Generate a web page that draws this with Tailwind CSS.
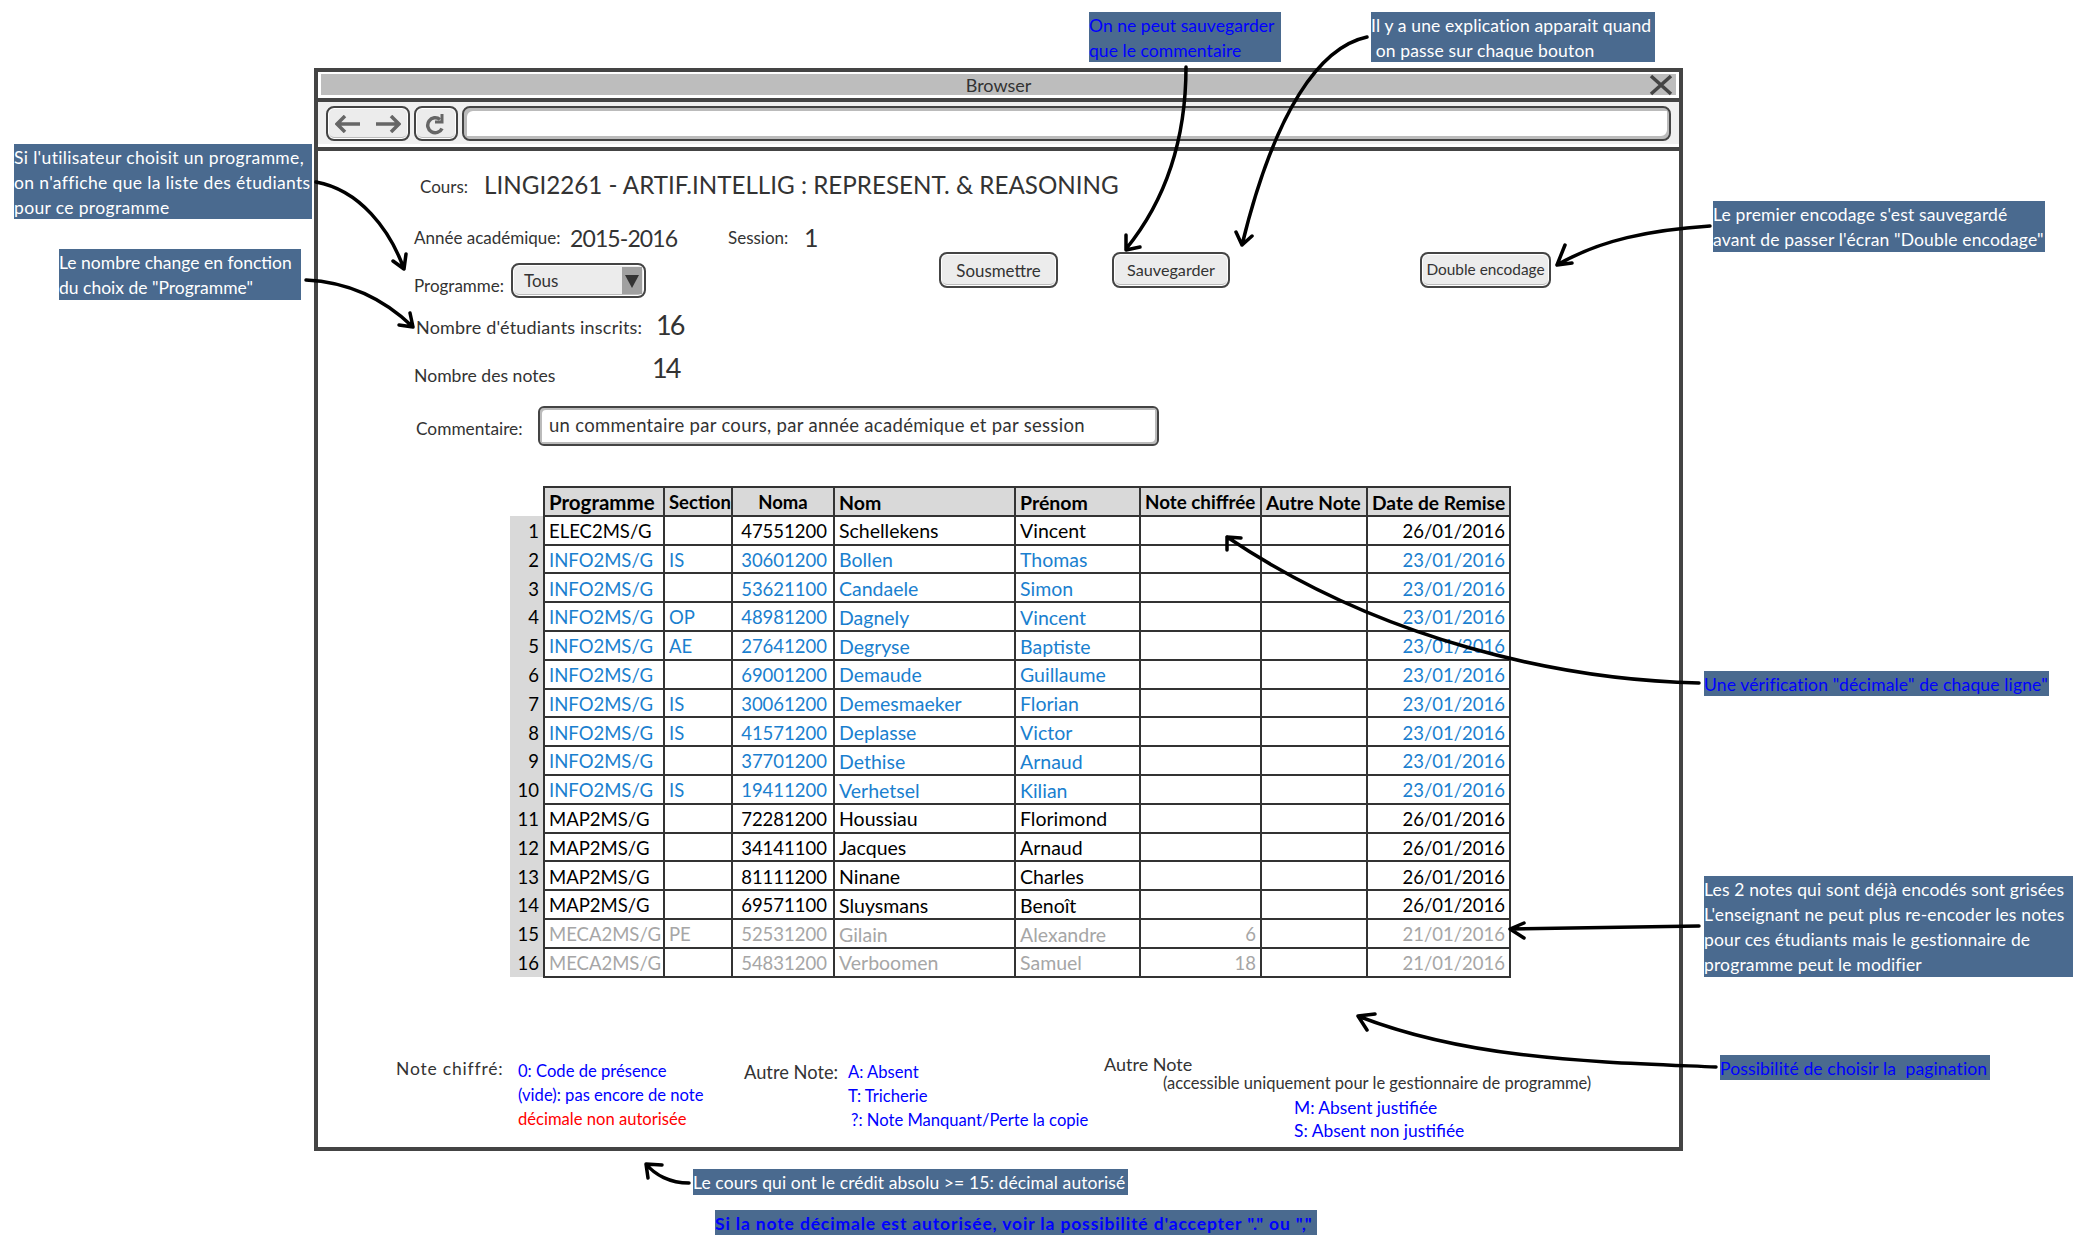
<!DOCTYPE html>
<html lang="fr">
<head>
    <meta charset="UTF-8">
    <title>Encodage des notes - wireframe</title>
    <script src="https://cdn.jsdelivr.net/npm/@tailwindcss/browser@4"></script>
</head>
<body class="bg-white">
<div class="relative w-[2090px] h-[1252px] overflow-hidden font-['Lato',sans-serif] text-[#333]">

    <!-- Browser window -->
    <div class="absolute left-[314px] top-[68px] w-[1369px] h-[1083px] flex flex-col border-4 border-[#444] bg-white">
        <!-- Title bar -->
        <div class="shrink-0 h-[26px] p-[2px_3px_3px_3px] bg-white">
            <div class="relative h-full flex items-center justify-center bg-[#bdbdbd] text-[18px] pt-[1px]">
                Browser
                <svg class="absolute right-[3px] top-0" width="24" height="22" viewBox="0 0 24 22" fill="none" stroke="#444" stroke-width="3.5"><path d="M2 2 L22 20 M22 2 L2 20"/></svg>
            </div>
        </div>
        <!-- Toolbar -->
        <div class="shrink-0 h-[53px] flex items-center gap-[4px] px-[8px] pb-[2px] border-y-4 border-[#444] bg-[#f0f0f0] shadow-[inset_0_-3px_0_#fff]">
            <div class="w-[84px] h-[35px] flex items-center justify-center gap-[14px] rounded-lg border-2 border-[#444] bg-[#ececec] shadow-[inset_0_0_0_1px_#fff,inset_0_-2px_0_#bbb]">
                <svg width="26" height="18" viewBox="0 0 26 18" fill="none" stroke="#666" stroke-width="3.5"><path d="M25 9 H2 M10 1 L2 9 L10 17"/></svg>
                <svg width="26" height="18" viewBox="0 0 26 18" fill="none" stroke="#666" stroke-width="3.5"><path d="M1 9 H24 M16 1 L24 9 L16 17"/></svg>
            </div>
            <div class="w-[44px] h-[35px] flex items-center justify-center rounded-lg border-2 border-[#444] bg-[#ececec] shadow-[inset_0_0_0_1px_#fff,inset_0_-2px_0_#bbb]">
                <svg width="22" height="22" viewBox="0 0 22 22" fill="none" stroke="#666" stroke-width="3.5"><path d="M15 6.5 A7.5 7.5 0 1 0 17 15.5"/><path d="M17 1 V9 H10" stroke-width="3"/></svg>
            </div>
            <div class="flex-1 h-[35px] rounded-lg border-2 border-[#444] bg-white shadow-[inset_3px_3px_0_#bbb,inset_-2px_-3px_0_#bbb]"></div>
        </div>

        <!-- Page content -->
        <div class="flex-1 flex flex-col">
            <div class="h-[32px] mt-[19px] pl-[102px] flex items-center gap-[16px]">
                <span class="text-[17px] pt-[2px]">Cours:</span>
                <span class="text-[24.2px] pb-[2px]">LINGI2261 - ARTIF.INTELLIG : REPRESENT. &amp; REASONING</span>
            </div>

            <div class="flex">
                <div class="w-[621px] pl-[96px] flex flex-col">
                    <div class="h-[32px] mt-[20px] flex items-center">
                        <span class="shrink-0 text-[17px] w-[156px]">Année académique:</span>
                        <span class="shrink-0 text-[23px] tracking-[-0.9px] w-[158px]">2015-2016</span>
                        <span class="shrink-0 text-[17px] w-[76px]">Session:</span>
                        <span class="text-[25px]">1</span>
                    </div>
                    <div class="h-[35px] mt-[9px] flex items-center">
                        <span class="shrink-0 text-[17px] w-[97px] pt-[10px]">Programme:</span>
                        <div class="shrink-0 w-[135px] h-[35px] flex justify-between rounded-lg border-2 border-[#444] bg-[#ececec] shadow-[inset_0_0_0_1px_#fff,inset_0_-2px_0_#bbb]">
                            <span class="pl-[11px] pt-[3px] text-[17px]">Tous</span>
                            <div class="w-[20px] h-[27px] mt-[2px] mr-[2px] flex items-center justify-center bg-[#a0a0a0]">
                                <svg width="14" height="14" viewBox="0 0 14 14"><path d="M0 1 H14 L7 14 Z" fill="#333"/></svg>
                            </div>
                        </div>
                    </div>
                    <div class="h-[36px] mt-[9px] flex items-center pl-[2px]">
                        <span class="shrink-0 text-[18px] tracking-[0.2px] w-[240px] pt-[5px]">Nombre d'étudiants inscrits:</span>
                        <span class="text-[27px] tracking-[-2px]">16</span>
                    </div>
                    <div class="h-[36px] mt-[7px] flex items-center">
                        <span class="shrink-0 text-[17.6px] w-[238px] pt-[16px]">Nombre des notes</span>
                        <span class="text-[27px] tracking-[-2px]">14</span>
                    </div>
                    <div class="h-[40px] mt-[20px] flex items-center pl-[2px]">
                        <span class="shrink-0 text-[17.3px] w-[122px] pt-[6px]">Commentaire:</span>
                        <div class="w-[621px] h-[40px] pl-[9px] flex items-center shrink-0 rounded-md border-2 border-[#444] bg-white shadow-[inset_2px_2px_0_#bbb,inset_-2px_-2px_0_#bbb] text-[18.5px] tracking-[0.3px]">un commentaire par cours, par année académique et par session</div>
                    </div>
                </div>
                <div class="flex items-start pt-[50px]">
                    <div class="w-[119px] h-[36px] pt-[2px] flex items-center justify-center rounded-lg border-2 border-[#444] bg-[#ececec] shadow-[inset_0_0_0_1px_#fff,inset_0_-2px_0_#bbb] text-[16.9px]">Sousmettre</div>
                    <div class="w-[118px] h-[36px] ml-[54px] flex items-center justify-center rounded-lg border-2 border-[#444] bg-[#ececec] shadow-[inset_0_0_0_1px_#fff,inset_0_-2px_0_#bbb] text-[16.2px]">Sauvegarder</div>
                    <div class="w-[131px] h-[36px] ml-[190px] flex items-center justify-center rounded-lg border-2 border-[#444] bg-[#ececec] shadow-[inset_0_0_0_1px_#fff,inset_0_-2px_0_#bbb] text-[15.4px]">Double encodage</div>
                </div>
            </div>

            <!-- Table -->
            <table class="ml-[192px] mt-[40px] w-[1000px] table-fixed border-collapse text-[18.5px] leading-none text-black [&_td]:px-[4px] [&_td]:pt-[2px] [&_td]:border-2 [&_td]:border-[#333] [&_th]:border-2 [&_th]:border-[#333] [&_th]:bg-[#d9d9d9] [&_th]:px-[4px] [&_th]:pt-[2px] [&_th]:font-bold [&_th]:text-left [&_th]:whitespace-nowrap [&_tr]:h-[28.8px] [&_td:nth-child(4)]:pr-[6px] [&_td:nth-child(5)]:text-[19.5px] [&_td:nth-child(6)]:text-[19.5px]">
                <colgroup>
                    <col class="w-[34px]"><col class="w-[120px]"><col class="w-[68px]"><col class="w-[102px]"><col class="w-[181px]"><col class="w-[125px]"><col class="w-[121px]"><col class="w-[106px]"><col class="w-[143px]">
                </colgroup>
                <thead>
                    <tr>
                        <th class="!bg-white !border-0 !border-r-2"></th><th class="text-[20.5px]">Programme</th><th>Section</th><th class="!text-center">Noma</th><th class="text-[19.5px]">Nom</th><th class="text-[19.5px]">Prénom</th><th class="text-[18.8px]">Note chiffrée</th><th class="text-[19px]">Autre Note</th><th class="text-[19.2px]">Date de Remise</th>
                    </tr>
                </thead>
                <tbody>
                    <tr><td class="!border-0 !border-r-2 bg-[#d9d9d9] text-right">1</td><td>ELEC2MS/G</td><td></td><td class="text-right">47551200</td><td>Schellekens</td><td>Vincent</td><td></td><td></td><td class="text-right">26/01/2016</td></tr>
                    <tr class="text-[#1a7fcf]"><td class="!border-0 !border-r-2 bg-[#d9d9d9] text-right text-black">2</td><td>INFO2MS/G</td><td>IS</td><td class="text-right">30601200</td><td>Bollen</td><td>Thomas</td><td></td><td></td><td class="text-right">23/01/2016</td></tr>
                    <tr class="text-[#1a7fcf]"><td class="!border-0 !border-r-2 bg-[#d9d9d9] text-right text-black">3</td><td>INFO2MS/G</td><td></td><td class="text-right">53621100</td><td>Candaele</td><td>Simon</td><td></td><td></td><td class="text-right">23/01/2016</td></tr>
                    <tr class="text-[#1a7fcf]"><td class="!border-0 !border-r-2 bg-[#d9d9d9] text-right text-black">4</td><td>INFO2MS/G</td><td>OP</td><td class="text-right">48981200</td><td>Dagnely</td><td>Vincent</td><td></td><td></td><td class="text-right">23/01/2016</td></tr>
                    <tr class="text-[#1a7fcf]"><td class="!border-0 !border-r-2 bg-[#d9d9d9] text-right text-black">5</td><td>INFO2MS/G</td><td>AE</td><td class="text-right">27641200</td><td>Degryse</td><td>Baptiste</td><td></td><td></td><td class="text-right">23/01/2016</td></tr>
                    <tr class="text-[#1a7fcf]"><td class="!border-0 !border-r-2 bg-[#d9d9d9] text-right text-black">6</td><td>INFO2MS/G</td><td></td><td class="text-right">69001200</td><td>Demaude</td><td>Guillaume</td><td></td><td></td><td class="text-right">23/01/2016</td></tr>
                    <tr class="text-[#1a7fcf]"><td class="!border-0 !border-r-2 bg-[#d9d9d9] text-right text-black">7</td><td>INFO2MS/G</td><td>IS</td><td class="text-right">30061200</td><td>Demesmaeker</td><td>Florian</td><td></td><td></td><td class="text-right">23/01/2016</td></tr>
                    <tr class="text-[#1a7fcf]"><td class="!border-0 !border-r-2 bg-[#d9d9d9] text-right text-black">8</td><td>INFO2MS/G</td><td>IS</td><td class="text-right">41571200</td><td>Deplasse</td><td>Victor</td><td></td><td></td><td class="text-right">23/01/2016</td></tr>
                    <tr class="text-[#1a7fcf]"><td class="!border-0 !border-r-2 bg-[#d9d9d9] text-right text-black">9</td><td>INFO2MS/G</td><td></td><td class="text-right">37701200</td><td>Dethise</td><td>Arnaud</td><td></td><td></td><td class="text-right">23/01/2016</td></tr>
                    <tr class="text-[#1a7fcf]"><td class="!border-0 !border-r-2 bg-[#d9d9d9] text-right text-black">10</td><td>INFO2MS/G</td><td>IS</td><td class="text-right">19411200</td><td>Verhetsel</td><td>Kilian</td><td></td><td></td><td class="text-right">23/01/2016</td></tr>
                    <tr><td class="!border-0 !border-r-2 bg-[#d9d9d9] text-right">11</td><td>MAP2MS/G</td><td></td><td class="text-right">72281200</td><td>Houssiau</td><td>Florimond</td><td></td><td></td><td class="text-right">26/01/2016</td></tr>
                    <tr><td class="!border-0 !border-r-2 bg-[#d9d9d9] text-right">12</td><td>MAP2MS/G</td><td></td><td class="text-right">34141100</td><td>Jacques</td><td>Arnaud</td><td></td><td></td><td class="text-right">26/01/2016</td></tr>
                    <tr><td class="!border-0 !border-r-2 bg-[#d9d9d9] text-right">13</td><td>MAP2MS/G</td><td></td><td class="text-right">81111200</td><td>Ninane</td><td>Charles</td><td></td><td></td><td class="text-right">26/01/2016</td></tr>
                    <tr><td class="!border-0 !border-r-2 bg-[#d9d9d9] text-right">14</td><td>MAP2MS/G</td><td></td><td class="text-right">69571100</td><td>Sluysmans</td><td>Benoît</td><td></td><td></td><td class="text-right">26/01/2016</td></tr>
                    <tr class="text-[#a6a6a6]"><td class="!border-0 !border-r-2 bg-[#d9d9d9] text-right text-black">15</td><td>MECA2MS/G</td><td>PE</td><td class="text-right">52531200</td><td>Gilain</td><td>Alexandre</td><td class="text-right">6</td><td></td><td class="text-right">21/01/2016</td></tr>
                    <tr class="text-[#a6a6a6]"><td class="!border-0 !border-r-2 bg-[#d9d9d9] text-right text-black">16</td><td>MECA2MS/G</td><td></td><td class="text-right">54831200</td><td>Verboomen</td><td>Samuel</td><td class="text-right">18</td><td></td><td class="text-right">21/01/2016</td></tr>
                </tbody>
            </table>

            <!-- Legend -->
            <div class="flex ml-[78px] mt-[73px] text-[16.6px] leading-[24px]">
                <div class="w-[122px] pt-[6px] text-[17.5px] tracking-[0.8px] whitespace-nowrap">Note chiffré:</div>
                <div class="w-[226px] pt-[8px] text-[#0000ff]">
                    <p>0: Code de présence</p>
                    <p>(vide): pas encore de note</p>
                    <p class="text-[#ff0000]">décimale non autorisée</p>
                </div>
                <div class="w-[104px] pt-[9px] text-[18.3px] whitespace-nowrap">Autre Note:</div>
                <div class="w-[256px] pt-[9px] text-[#0000ff]">
                    <p>A: Absent</p>
                    <p>T: Tricherie</p>
                    <p class="pl-[3px]">?: Note Manquant/Perte la copie</p>
                </div>
                <div class="pt-[3px] whitespace-nowrap">
                    <p class="text-[18px] leading-[20px]">Autre Note</p>
                    <p class="pl-[59px] text-[16.5px] leading-[18px]">(accessible uniquement pour le gestionnaire de programme)</p>
                    <div class="pl-[190px] pt-[4px] text-[#0000ff] text-[17.4px] leading-[23px]">
                        <p>M: Absent justifiée</p>
                        <p>S: Absent non justifiée</p>
                    </div>
                </div>
            </div>
        </div>
    </div>

    <!-- Annotation boxes -->
    <div class="text-[17.5px] leading-[25px] tracking-[0.15px] whitespace-nowrap [&>div]:pt-[1px]">
        <div class="absolute left-[1089px] top-[12px] w-[192px] h-[50px] bg-[#4a6a8f] text-[#0000ff] tracking-[0.05px]">On ne peut sauvegarder<br>que le commentaire</div>
        <div class="absolute left-[1371px] top-[12px] w-[284px] h-[50px] bg-[#4a6a8f] text-white">Il y a une explication apparait quand<br>&nbsp;on passe sur chaque bouton</div>
        <div class="absolute left-[1713px] top-[201px] w-[332px] h-[51px] bg-[#4a6a8f] text-white">Le premier encodage s'est sauvegardé<br>avant de passer l'écran "Double encodage"</div>
        <div class="absolute left-[14px] top-[144px] w-[298px] h-[75px] bg-[#4a6a8f] text-white tracking-[0.35px]">Si l'utilisateur choisit un programme,<br>on n'affiche que la liste des étudiants<br>pour ce programme</div>
        <div class="absolute left-[59px] top-[249px] w-[242px] h-[51px] bg-[#4a6a8f] text-white tracking-[0px]">Le nombre change en fonction<br>du choix de "Programme"</div>
        <div class="absolute left-[1704px] top-[671px] w-[345px] h-[25px] bg-[#4a6a8f] text-[#0000ff]">Une vérification "décimale" de chaque ligne"</div>
        <div class="absolute left-[1704px] top-[876px] w-[369px] h-[101px] bg-[#4a6a8f] text-white">Les 2 notes qui sont déjà encodés sont grisées<br>L'enseignant ne peut plus re-encoder les notes<br>pour ces étudiants mais le gestionnaire de<br>programme peut le modifier</div>
        <div class="absolute left-[1720px] top-[1055px] w-[270px] h-[25px] bg-[#4a6a8f] text-[#0000ff]">Possibilité de choisir la&nbsp; pagination</div>
        <div class="absolute left-[693px] top-[1169px] w-[435px] h-[26px] bg-[#4a6a8f] text-white tracking-[0.1px]">Le cours qui ont le crédit absolu &gt;= 15: décimal autorisé</div>
        <div class="absolute left-[715px] top-[1210px] w-[602px] h-[25px] bg-[#4a6a8f] text-[#0000ff] font-bold tracking-[0.85px]">Si la note décimale est autorisée, voir la possibilité d'accepter "." ou ","</div>
    </div>

    <!-- Arrows -->
    <svg class="absolute left-0 top-0 pointer-events-none" width="2090" height="1252" viewBox="0 0 2090 1252" fill="none" stroke="#000" stroke-width="3.5" stroke-linecap="round" stroke-linejoin="round">
        <path d="M1186 67 C1186 130 1170 195 1126 249 M1126 235 L1126 250 L1140 247"/>
        <path d="M1367 37 C1320 47 1275 110 1242 245 M1236 232 L1242 245 L1252 236"/>
        <path d="M1710 226 C1650 230 1600 240 1557 265 M1565 245 L1557 265 L1572 263"/>
        <path d="M316 182 C360 190 390 230 404 269 M393 261 L404 269 L406 254"/>
        <path d="M306 280 C350 282 385 300 413 327 M399 325 L413 327 L410 313"/>
        <path d="M1699 683 C1560 680 1380 640 1227 537 M1241 538 L1227 537 L1227 550"/>
        <path d="M1699 926 L1510 929 M1524 923 L1510 929 L1524 938"/>
        <path d="M1716 1067 C1600 1062 1470 1060 1358 1016 M1375 1014 L1358 1016 L1367 1030"/>
        <path d="M689 1183 C670 1183 655 1175 646 1164 M662 1165 L646 1164 L648 1178"/>
    </svg>
</div>
</body>
</html>
